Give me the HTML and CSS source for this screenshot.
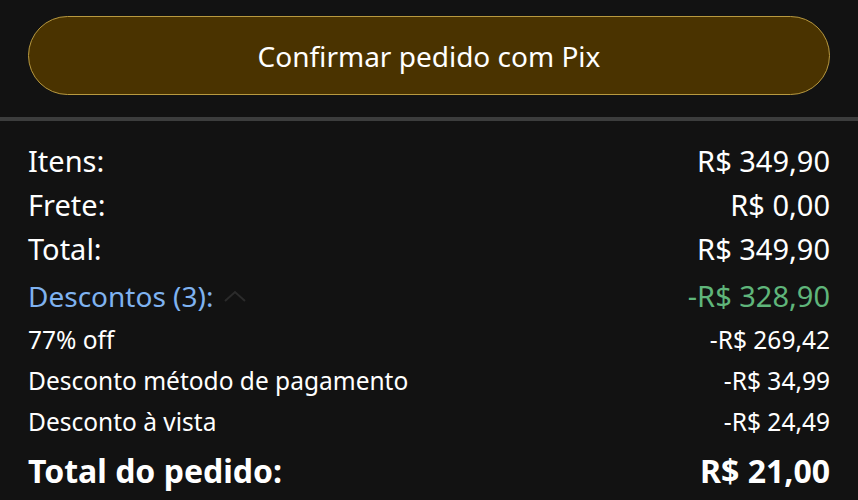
FILE: index.html
```html
<!DOCTYPE html>
<html lang="pt-BR">
<head>
  <meta charset="UTF-8">
  <title>Resumo do pedido</title>
  <link rel="stylesheet" href="styles.css">
</head>
<body>

  <div class="top">
    <button class="confirm">Confirmar pedido com Pix</button>
  </div>

  <div class="divider"></div>

  <div class="summary">
    <div class="row big">
      <span>Itens:</span>
      <span>R$ 349,90</span>
    </div>
    <div class="row big">
      <span>Frete:</span>
      <span>R$ 0,00</span>
    </div>
    <div class="row big">
      <span>Total:</span>
      <span>R$ 349,90</span>
    </div>
    <div class="row big discounts">
      <span class="disc-label">Descontos (3):
        <svg class="chevron" width="24" height="14" viewBox="0 0 24 14">
          <path d="M2 12 L12 3 L22 12" fill="none" stroke="#2b2b2b" stroke-width="2"/>
        </svg>
      </span>
      <span class="green">-R$ 328,90</span>
    </div>
    <div class="row small">
      <span>77% off</span>
      <span>-R$ 269,42</span>
    </div>
    <div class="row small">
      <span>Desconto método de pagamento</span>
      <span>-R$ 34,99</span>
    </div>
    <div class="row small">
      <span>Desconto à vista</span>
      <span>-R$ 24,49</span>
    </div>
    <div class="row total">
      <span>Total do pedido:</span>
      <span>R$ 21,00</span>
    </div>
  </div>

</body>
</html>
```

FILE: styles.css
```css
body {
  background-color: #121212;
  color: #ffffff;
  font-family: "Noto Sans", "Open Sans", sans-serif;
  margin: 0;
  padding: 0;
}

.top {
  padding: 16px 28px 22px 28px;
}

.confirm {
  display: block;
  width: 100%;
  height: 79px;
  background-color: #4a3300;
  border: 1.5px solid #b8993f;
  border-radius: 40px;
  color: #ffffff;
  font-family: "Noto Sans", "Open Sans", sans-serif;
  font-size: 28px;
  cursor: pointer;
}

.divider {
  height: 4px;
  background-color: #3c3d3d;
}

.summary {
  padding: 17px 28px 0 28px;
}

.row {
  display: flex;
  justify-content: space-between;
  align-items: center;
}

.row.big {
  font-size: 29px;
  height: 44px;
}

.row.discounts {
  height: 47px;
  margin-top: 2px;
}

.disc-label {
  color: #7fb2f0;
  display: flex;
  align-items: center;
  gap: 10px;
  font-size: 28px;
}

.green {
  color: #5fb57a;
}

.row.small {
  font-size: 24.5px;
  height: 41px;
}

.row.total {
  font-size: 32px;
  font-weight: bold;
  height: 56px;
}
```
